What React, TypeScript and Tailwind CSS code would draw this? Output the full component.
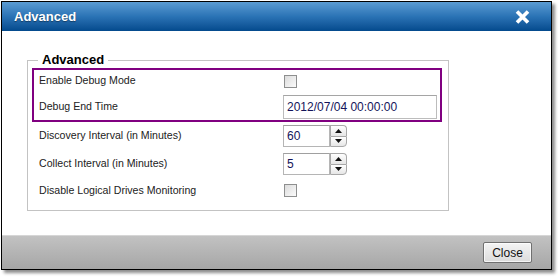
import React from 'react';

const FONT = { fontFamily: 'Tahoma, "Liberation Sans", Arial, sans-serif' };

const Checkbox: React.FC = () => (
  <div className="w-[13px] h-[13px] border border-[#8e8f8f] bg-gradient-to-br from-[#dcdcdc] to-[#fbfbfb]" />
);

const Spinner: React.FC<{ value: string }> = ({ value }) => (
  <div className="flex h-[22px]">
    <div className="w-[47px] h-full border border-[#b5b5b5] border-t-[#a0a0a0] bg-white flex items-center pl-[3px] text-[12px] text-[#14145a]">
      {value}
    </div>
    <div className="flex flex-col w-[17px] h-full">
      <div className="flex-1 border border-[#a8a8a8] border-b-0 rounded-tr-[4px] bg-gradient-to-b from-white to-[#e6e6e6] flex items-center justify-center">
        <svg width="7" height="4" viewBox="0 0 7 4"><path d="M0 4 L3.5 0 L7 4 Z" fill="#111" /></svg>
      </div>
      <div className="flex-1 border border-[#a8a8a8] rounded-br-[4px] bg-gradient-to-b from-white to-[#e6e6e6] flex items-center justify-center">
        <svg width="7" height="4" viewBox="0 0 7 4"><path d="M0 0 L3.5 4 L7 0 Z" fill="#111" /></svg>
      </div>
    </div>
  </div>
);

const Row: React.FC<{ label: string; className?: string; children: React.ReactNode }> = ({ label, className = '', children }) => (
  <div className={`flex items-center ${className}`}>
    <div className="w-[244px] text-[10.6px] text-[#222]">{label}</div>
    <div>{children}</div>
  </div>
);

export default function App() {
  return (
    <div className="w-[558px] h-[277px] bg-white relative" style={FONT}>
      <div className="absolute left-[1px] top-[1px] w-[551px] h-[269px] border border-black bg-white flex flex-col shadow-[3px_3px_3px_rgba(0,0,0,0.45)]">
        {/* title bar */}
        <div className="h-[29px] bg-gradient-to-b from-[#5a9bd2] via-[#2a73b5] to-[#034a8d] flex items-center justify-between pl-[12px] pr-[21px]">
          <span className="text-white font-bold text-[13px] [text-shadow:0_1px_1px_rgba(0,0,0,0.4)]">Advanced</span>
          <svg width="15" height="14" viewBox="0 0 15 14">
            <path d="M2 1.5 L13 12.5 M13 1.5 L2 12.5" stroke="white" strokeWidth="3.6" />
          </svg>
        </div>

        {/* body */}
        <div className="flex-1 pt-[21px] pl-[25px]">
          <fieldset className="w-[422px] h-[159px] border border-[#c3c3c3]">
            <legend className="ml-[10px] px-[4px] font-bold text-[13px] leading-[16px] text-black">Advanced</legend>
            <div className="ml-[4px] w-[410px] border-2 border-[#800080] flex flex-col">
              <Row label="Enable Debug Mode" className="h-[21px] pl-[5px]">
                <div className="ml-[1px] mt-[1px]"><Checkbox /></div>
              </Row>
              <Row label="Debug End Time" className="h-[29px] pl-[5px] pt-[3px] pb-[1px]">
                <div className="w-[154px] h-[24px] border border-[#bcbcbc] border-t-[#a5a5a5] bg-white flex items-center pl-[3px] text-[12px] text-[#14145a]">
                  2012/07/04 00:00:00
                </div>
              </Row>
            </div>
            <Row label="Discovery Interval (in Minutes)" className="h-[28px] pl-[11px]">
              <Spinner value="60" />
            </Row>
            <Row label="Collect Interval (in Minutes)" className="h-[28px] pl-[11px]">
              <Spinner value="5" />
            </Row>
            <Row label="Disable Logical Drives Monitoring" className="h-[25px] pl-[11px]">
              <div className="ml-[1px]"><Checkbox /></div>
            </Row>
          </fieldset>
        </div>

        {/* footer */}
        <div className="h-[34px] border-t border-[#d6d6d6] bg-gradient-to-b from-[#c2c2c2] to-[#a6a6a6] flex items-center justify-end pr-[19px]">
          <button className="w-[49px] h-[21px] rounded-[2px] border border-[#707070] bg-gradient-to-b from-[#f4f4f4] to-[#dcdcdc] text-[12px] text-[#111] shadow-[inset_0_0_0_1px_rgba(255,255,255,0.7)]">
            Close
          </button>
        </div>
      </div>
    </div>
  );
}
